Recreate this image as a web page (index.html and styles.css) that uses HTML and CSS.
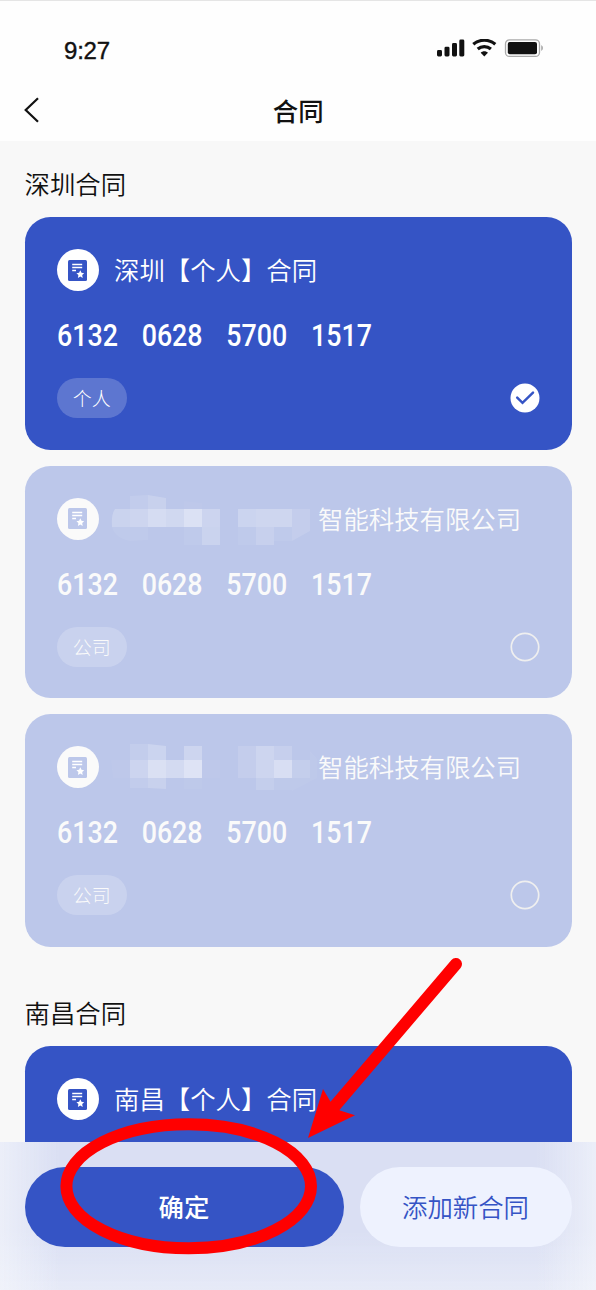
FILE: index.html
```
<!DOCTYPE html>
<html lang="zh-CN">
<head>
<meta charset="utf-8">
<title>合同</title>
<link rel="stylesheet" href="styles.css">
</head>
<body>
<svg class="defs" width="0" height="0">
  <symbol id="contract" viewBox="0 0 19 21">
    <rect width="19" height="21" rx="1.5" fill="currentColor"/>
    <path d="M4.2 4.5H14.2M4.2 7.5H14.2M4.2 10.5H8" stroke="#fff" stroke-width="1.4"/>
    <path d="m12.3 10.3 1.2 2.5 2.7.4-2 1.9.5 2.8-2.4-1.4-2.4 1.4.5-2.8-2-1.9 2.7-.4z" fill="#fff"/>
  </symbol>
</svg>
<div class="screen">
  <header class="header">
    <div class="status">
      <span class="time">9:27</span>
      <svg class="status-icons" width="108" height="20" viewBox="0 0 108 20">
        <g fill="#111">
          <rect x="1" y="11" width="5" height="6.5" rx="1.4"/><rect x="8.5" y="7.7" width="5" height="9.8" rx="1.4"/><rect x="16" y="4" width="5" height="13.5" rx="1.4"/><rect x="23.3" y=".5" width="5" height="17" rx="1.4"/>
          <path d="M48.3 17.5 44.7 13.8C46.6 11.8 50 11.8 51.9 13.8Z"/>
        </g>
        <path d="M37.3 5.3C43.6-.1 53-.1 59.3 5.3M41.7 10C45.6 6.7 51 6.7 54.9 10" fill="none" stroke="#111" stroke-width="3.2"/>
        <rect x="69.5" y=".8" width="34" height="16.6" rx="4" fill="none" stroke="#aaa" stroke-width="1.3"/>
        <rect x="71.8" y="3" width="29.2" height="12.2" rx="2" fill="#111"/>
        <path d="M105.2 6V12Q107 11 107 9T105.2 6" fill="#aaa"/>
      </svg>
    </div>
    <nav class="nav">
      <svg class="back" width="18" height="28" viewBox="0 0 18 28"><path d="M16 2.3 3.7 14 16 25.7" fill="none" stroke="#111" stroke-width="2.2"/></svg>
      <h1 class="page-title">合同</h1>
    </nav>
  </header>
  <main class="content">
    <h2 class="section-title">深圳合同</h2>
    <div class="cards">
      <article class="card">
        <div class="card-head"><span class="badge"><svg class="doc"><use href="#contract"/></svg></span><span class="name">深圳【个人】合同</span></div>
        <div class="number"><span>6132</span><span>0628</span><span>5700</span><span>1517</span></div>
        <div class="card-foot"><span class="tag">个人</span><svg class="radio" viewBox="0 0 30 30"><circle cx="15" cy="15" r="14.5" fill="#fff"/><path d="m7.2 14.7 5.3 5.1L23 9.7" fill="none" stroke="#3554c5" stroke-width="2.5" stroke-linecap="round"/></svg></div>
      </article>
      <article class="card muted">
        <div class="card-head"><span class="badge"><svg class="doc"><use href="#contract"/></svg></span>
          <svg class="mosaic" viewBox="0 0 204 50" fill="#fff">
            <path d="M16 2 34 1V15H16Z" opacity=".1"/><path d="M34 1 52 4V15H34Z" opacity=".18"/><path d="M70 7 88 9V15H70Z" opacity=".03"/>
            <path d="M1 15H16V33H-2Q-3 20 1 15" opacity=".22"/><path d="M16 15H34V33H16Z" opacity=".26"/><path d="M34 15H52V33H34Z" opacity=".38"/><path d="M52 15H70V33H52Z" opacity=".3"/><path d="M70 15H88V33H70Z" opacity=".46"/><path d="M88 15H106V33H88Z" opacity=".24"/>
            <path d="M-2 33H16V47Q1 44-2 33M16 33H34V46L16 47ZM70 33H88V51H70Z" opacity=".06"/><path d="M88 33H106V51H88Z" opacity=".22"/>
            <path d="M124 15H142V33H124Z" opacity=".23"/><path d="M142 15H178V33H142Z" opacity=".27"/><path d="M178 15H196V37L178 47Z" opacity=".12"/><path d="M124 33H142V51H124ZM160 33H178V47H160Z" opacity=".06"/><path d="M142 33H160V51H142Z" opacity=".17"/>
          </svg>
          <span class="name">智能科技有限公司</span></div>
        <div class="number"><span>6132</span><span>0628</span><span>5700</span><span>1517</span></div>
        <div class="card-foot"><span class="tag">公司</span><svg class="radio" viewBox="0 0 30 30"><circle cx="15" cy="15" r="13.7" fill="none" stroke="#efefef" stroke-width="1.7"/></svg></div>
      </article>
      <article class="card muted">
        <div class="card-head"><span class="badge"><svg class="doc"><use href="#contract"/></svg></span>
          <svg class="mosaic" viewBox="0 0 204 50" fill="#fff">
            <path d="M16 2H34V18H16Z" opacity=".11"/><path d="M34 2 52 4V18H34Z" opacity=".23"/><path d="M70 4H88V18H70Z" opacity=".26"/>
            <path d="M-3 18H16V36H-1ZM88 18H106V36H88Z" opacity=".03"/><path d="M16 18H34V36H16Z" opacity=".24"/><path d="M34 18H52V36H34Z" opacity=".45"/><path d="M52 18H70V36H52Z" opacity=".34"/><path d="M70 18H88V36H70Z" opacity=".5"/>
            <path d="M16 36H34V46H16Z" opacity=".1"/><path d="M34 36H52V47L34 46Z" opacity=".18"/><path d="M70 36H88V47H70Z" opacity=".04"/>
            <path d="M124 4H142V36H124Z" opacity=".12"/><path d="M142 4H160V36H142Z" opacity=".25"/><path d="M160 4H178V18H160Z" opacity=".15"/><path d="M160 18H178V36H160Z" opacity=".42"/><path d="M178 18H196V36H178Z" opacity=".13"/><path d="M142 36H160V48H142Z" opacity=".13"/><path d="M160 36H178V48H160ZM196 9 203 17V36L178 49V36H196Z" opacity=".04"/>
          </svg>
          <span class="name">智能科技有限公司</span></div>
        <div class="number"><span>6132</span><span>0628</span><span>5700</span><span>1517</span></div>
        <div class="card-foot"><span class="tag">公司</span><svg class="radio" viewBox="0 0 30 30"><circle cx="15" cy="15" r="13.7" fill="none" stroke="#efefef" stroke-width="1.7"/></svg></div>
      </article>
    </div>
    <h2 class="section-title second">南昌合同</h2>
    <article class="card">
      <div class="card-head"><span class="badge"><svg class="doc"><use href="#contract"/></svg></span><span class="name">南昌【个人】合同</span></div>
    </article>
  </main>
  <footer class="actions">
    <button class="btn primary">确定</button>
    <button class="btn secondary">添加新合同</button>
  </footer>
  <svg class="marks" viewBox="0 0 596 1290">
    <ellipse cx="188.7" cy="1186.3" rx="122.3" ry="62" fill="none" stroke="#f00" stroke-width="12"/>
    <path d="M456 964 334 1107" stroke="#f00" stroke-width="12" stroke-linecap="round"/>
    <path d="M308 1138 323 1089 331 1102.5 340 1110.5 355 1115.3Z" fill="#f00"/>
  </svg>
</div>
</body>
</html>
```
FILE: styles.css
```
* { box-sizing: border-box; }
body {
  margin: 0;
  color: #111;
  font-family: "Noto Sans CJK SC", sans-serif;
}
.defs { position: absolute; }
.screen {
  position: relative;
  display: flex;
  flex-direction: column;
  width: 596px;
  height: 1290px;
  overflow: hidden;
  background: #f8f8f8;
}
.header {
  flex: none;
  height: 140.5px;
  border-top: 1px solid #e5e5e5;
  background: #fefefe;
}
.status {
  display: flex;
  justify-content: space-between;
  align-items: flex-start;
  height: 79px;
  padding: 34px 52px 0 64px;
}
.time {
  font: 500 24px/32px "Liberation Sans", Arial, sans-serif;
  letter-spacing: -0.2px;
  -webkit-text-stroke: 0.4px #111;
}
.status-icons { margin-top: 4px; }
.nav {
  display: grid;
  grid-template-columns: 32px 1fr 32px;
  align-items: center;
  height: 60px;
  padding: 0 21.5px 0 22px;
}
.page-title {
  margin: 0;
  text-align: center;
  font-size: 25.4px;
  font-weight: 500;
  line-height: 36px;
}
.content {
  flex: 1;
  min-height: 0;
  overflow: hidden;
  padding: 23px 24.5px 0;
}
.section-title {
  height: 38px;
  margin: 0 0 15.5px;
  font-size: 25.4px;
  font-weight: 350;
  line-height: 38px;
}
.second { margin-top: 45.8px; }
.cards { display: grid; gap: 16.2px; }
.card {
  height: 232.5px;
  padding: 32px 32px 0;
  border-radius: 25.4px;
  background: #3554c5;
  color: #fff;
}
.card.muted { background: #bcc7ea; color: #fafafa; }
.card-head {
  display: flex;
  align-items: center;
  height: 42px;
}
.badge {
  display: grid;
  place-items: center;
  flex: none;
  width: 42px;
  height: 42px;
  margin-right: 15.5px;
  border-radius: 50%;
  background: #fff;
  color: #3554c5;
}
.muted .badge { background: #fafafa; color: #bcc7ea; }
.doc { width: 19px; height: 21px; }
.name {
  padding-bottom: 2px;
  font-size: 25.4px;
  font-weight: 350;
  line-height: 38px;
  white-space: nowrap;
}
.mosaic {
  flex: none;
  width: 204px;
  height: 50px;
  overflow: visible;
}
.number {
  display: grid;
  grid-template-columns: repeat(4, 101px);
  height: 38px;
  margin-top: 25px;
  font: 500 32px/38px Roboto, sans-serif;
  transform: scaleX(0.838);
  transform-origin: left;
}
.card-foot {
  display: flex;
  align-items: center;
  justify-content: space-between;
  height: 40px;
  margin-top: 24px;
}
.tag {
  width: 70.5px;
  height: 40px;
  border-radius: 20px;
  background: rgba(255, 255, 255, 0.2);
  text-align: center;
  font-size: 19px;
  font-weight: 300;
  line-height: 40px;
}
.radio { width: 30px; height: 30px; }
.actions {
  display: flex;
  flex: none;
  gap: 16px;
  height: 148.5px;
  padding: 25.5px 24.5px 0;
  background:
    linear-gradient(to right, rgba(245, 247, 252, 0.65), transparent 60px, transparent calc(100% - 60px), rgba(245, 247, 252, 0.65)),
    linear-gradient(to bottom, transparent 60%, rgba(245, 247, 252, 0.45)),
    #dadff3;
}
.btn {
  height: 80px;
  padding: 0 0 2px;
  border: 0;
  border-radius: 40px;
  font-family: inherit;
  font-size: 25.4px;
}
.primary {
  width: 319px;
  background: #3554c5;
  color: #fff;
  font-weight: 500;
}
.secondary {
  width: 212px;
  background: #eef2fe;
  color: #3554c5;
  font-weight: 350;
}
.marks {
  position: absolute;
  inset: 0;
  width: 596px;
  height: 1290px;
  pointer-events: none;
}
```
